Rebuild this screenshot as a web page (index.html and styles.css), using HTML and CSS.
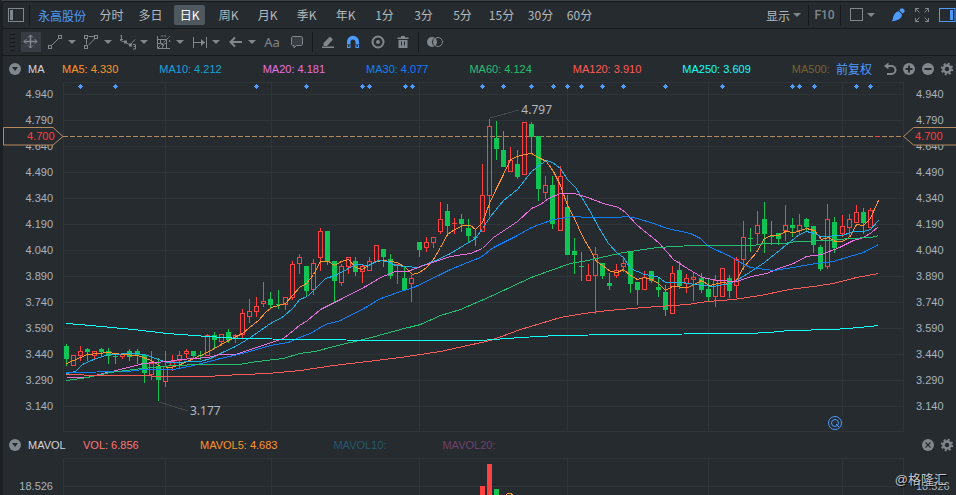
FILE: index.html
```html
<!DOCTYPE html>
<html lang="zh-CN">
<head>
  <meta charset="UTF-8">
  <meta name="viewport" content="width=device-width, initial-scale=1.0">
  <title>永高股份 日K</title>
  <link rel="stylesheet" href="styles.css">
</head>
<body>

<nav class="bar periods">
  <button class="icon-btn panel-left" aria-label="侧栏">
    <svg width="16" height="14" viewBox="0 0 16 14"><rect x="0.5" y="0.5" width="15" height="13" fill="none" stroke="currentColor"/><rect x="2" y="2" width="3" height="10" fill="currentColor"/></svg>
  </button>
  <span class="sep"></span>
  <a class="stock" href="#">永高股份</a>
  <div class="tabs">
    <button>分时</button>
    <button>多日</button>
    <button class="active">日K</button>
    <button>周K</button>
    <button>月K</button>
    <button>季K</button>
    <button>年K</button>
    <button>1分</button>
    <button>3分</button>
    <button>5分</button>
    <button>15分</button>
    <button>30分</button>
    <button>60分</button>
  </div>
  <div class="bar-right">
    <button class="display">显示<i class="caret"></i></button>
    <span class="sep"></span>
    <button class="f10">F10</button>
    <span class="sep"></span>
    <button class="shape" aria-label="形状"><svg width="14" height="14" viewBox="0 0 14 14"><rect x="0.5" y="0.5" width="12" height="12" fill="none" stroke="currentColor"/></svg><i class="caret"></i></button>
    <button class="icon-btn blue brush" aria-label="画笔">
      <svg width="14" height="14" viewBox="0 0 14 14" fill="currentColor"><path d="M9.500 .5h2.500l1.500 1.500v2l-2 1.500-3-3z"/><path d="M7.500 3l3.500 3.500c-.5 4-3 6-10.500 6.800 1.500-1.300 1.200-2.300 1.700-4.300C3 6 5 4 7.500 3z"/></svg>
    </button>
    <button class="icon-btn expand" aria-label="全屏">
      <svg width="14" height="14" viewBox="0 0 14 14" fill="none" stroke="currentColor"><path d="M.5 4V.5H4M.5.5l4 4M10 .5h3.500V4M13.500.5l-4 4M.5 10v3.500H4M.5 13.500l4-4M13.500 10v3.500H10M13.500 13.500l-4-4"/></svg>
    </button>
    <button class="icon-btn blue" aria-label="右栏">
      <svg width="17" height="14" viewBox="0 0 17 14"><rect x="0.5" y="0.5" width="15.500" height="13" fill="none" stroke="currentColor"/><rect x="11" y="2" width="3" height="10" fill="currentColor"/></svg>
    </button>
  </div>
</nav>

<div class="bar tools">
  <span class="handle"></span>
  <button class="tool selected" aria-label="移动">
    <svg width="16" height="16" viewBox="0 0 16 16" fill="none" stroke="currentColor"><path d="M7.500 1v13M1 7.500h13" stroke-width="1.500"/><path d="M5 3.500L7.500 1 10 3.500M5 11.500L7.500 14l2.500-2.500M3.500 5L1 7.500 3.500 10M11.500 5L14 7.500 11.500 10"/></svg>
  </button>
  <div class="draw-tools">
    <button aria-label="线段"><svg width="16" height="16" viewBox="0 0 16 16" fill="none" stroke="currentColor"><path d="M3.500 11.500l7-7"/><rect x="0.5" y="11.500" width="3" height="3"/><rect x="10.500" y="1.500" width="3" height="3"/></svg><i class="caret"></i></button>
    <button aria-label="多边形"><svg width="16" height="16" viewBox="0 0 16 16" fill="none" stroke="currentColor"><path d="M4.500 2.500h6M2.500 4.500v6M4.500 11l6.500-6.500"/><rect x="0.500" y="1.500" width="3" height="3"/><rect x="10.500" y="1.500" width="3" height="3"/><rect x="0.500" y="11.500" width="3" height="3"/></svg><i class="caret"></i></button>
    <button aria-label="波浪"><svg width="16" height="16" viewBox="0 0 16 16" fill="none" stroke="currentColor"><path d="M0 2.500L1.500 1v4M0 5.500h3M0 6.500L5 8l5 3 5-5.500"/><path d="M13 10.500h2.500V15H13M13.500 12.500h2"/><g fill="currentColor" stroke="none"><path d="M4 6.500h3v3H4zM9 9.500h3v3H9z"/></g></svg><i class="caret"></i></button>
    <button aria-label="江恩"><svg width="16" height="16" viewBox="0 0 16 16" fill="none" stroke="currentColor"><path d="M1.500 2v12.500H14M1.500 5.500h9v9"/><path d="M2 14L14 2" stroke-dasharray="3 1"/><path d="M4.500 5.500v4h-3M6.500 14c0-3 1-4 4-5M6 1v2M9 1v2M13.500 6v2M4 8l4 4" /></svg><i class="caret"></i></button>
    <button aria-label="区间"><svg width="16" height="16" viewBox="0 0 16 16" fill="none" stroke="currentColor"><path d="M1.500 3v11M14.500 3v11M2 8.500h11"/><path d="M9 5l4 3.500L9 12z" fill="currentColor" stroke="none"/></svg><i class="caret"></i></button>
    <button aria-label="箭头"><svg width="16" height="16" viewBox="0 0 16 16" fill="none" stroke="currentColor" stroke-width="2"><path d="M2.500 8H14M7 3.500L2.500 8 7 12.500"/></svg><i class="caret"></i></button>
  </div>
  <button class="tool text-tool">Aa</button>
  <button class="tool" aria-label="批注">
    <svg width="14" height="14" viewBox="0 0 14 14" stroke="currentColor" fill="#373d42"><path d="M2.500 1.500h9l1 1v7l-1 1H6.500L4 13v-2.500H2.500l-1-1v-7z"/></svg>
  </button>
  <span class="sep"></span>
  <div class="edit-tools">
    <button aria-label="标记"><svg width="14" height="14" viewBox="0 0 14 14" fill="currentColor"><path d="M9 1.500L12 4.500l-6 6.500H2.500V8z"/><path d="M1 11.500h12V13H1z"/></svg></button>
    <button class="blue" aria-label="磁铁"><svg width="14" height="14" viewBox="0 0 14 14" fill="currentColor"><path d="M1 9.500V6.800a6 6 0 0 1 12 0v2.700H9.500V7a2.500 2.500 0 0 0-5 0v2.500zM1 10v3h3.500v-3h-1v2H2v-2zM9.500 10v3H13v-3h-1v2h-1.500v-2z"/></svg></button>
    <button aria-label="显示"><svg width="14" height="14" viewBox="0 0 14 14"><circle cx="7" cy="7" r="5.500" fill="none" stroke="currentColor" stroke-width="2"/><circle cx="7" cy="7" r="2" fill="currentColor"/></svg></button>
    <button aria-label="删除"><svg width="14" height="14" viewBox="0 0 14 14" fill="currentColor"><path d="M1.500 2.500H5V1h4v1.500h3.500V4h-11zM2.500 5h9v8h-9z"/><path d="M5.500 6.500v4M8.500 6.500v4" stroke="#262b2f"/></svg></button>
  </div>
  <span class="sep"></span>
  <button class="tool" aria-label="叠加">
    <svg width="17" height="12" viewBox="0 0 17 12"><circle cx="5" cy="6" r="5" fill="currentColor"/><circle cx="11" cy="6" r="4.500" fill="none" stroke="currentColor"/><path d="M7.500 2a5 5 0 0 0 0 8" fill="none" stroke="#262b2f"/></svg>
  </button>
</div>

<section class="panel">
  <div class="panel-head">
    <button class="fold" aria-label="收起"></button>
    <span class="name">MA</span>
    <div class="legend">
      <span class="ma5">MA5: 4.330</span>
      <span class="ma10">MA10: 4.212</span>
      <span class="ma20">MA20: 4.181</span>
      <span class="ma30">MA30: 4.077</span>
      <span class="ma60">MA60: 4.124</span>
      <span class="ma120">MA120: 3.910</span>
      <span class="ma250">MA250: 3.609</span>
      <span class="ma500">MA500:</span>
    </div>
    <div class="head-icons">
      <a class="adjust" href="#">前复权</a>
      <button aria-label="撤销"><svg width="14" height="14" viewBox="0 0 14 14" fill="none" stroke="currentColor" stroke-width="2"><path d="M2 4h6.500a4 4 0 0 1 0 8H4"/><path d="M5.500.5L1 4l4.500 3.500z" fill="currentColor" stroke="none"/></svg></button>
      <button aria-label="放大"><svg width="14" height="14" viewBox="0 0 14 14"><circle cx="7" cy="7" r="6" fill="currentColor"/><path d="M7 3.500v7M3.500 7h7" stroke="#262b2f" stroke-width="2"/></svg></button>
      <button aria-label="缩小"><svg width="14" height="14" viewBox="0 0 14 14"><circle cx="7" cy="7" r="6" fill="currentColor"/><path d="M3.500 7h7" stroke="#262b2f" stroke-width="2"/></svg></button>
      <button aria-label="设置"><svg width="14" height="14" viewBox="0 0 14 14"><circle cx="7" cy="7" r="3.500" fill="none" stroke="currentColor" stroke-width="2.500"/><circle cx="7" cy="7" r="5.300" fill="none" stroke="currentColor" stroke-width="1.800" stroke-dasharray="2.080 2.080"/></svg></button>
    </div>
  </div>

  <div class="chart price-chart">
    <ul class="axis">
      <li>4.940</li><li>4.790</li><li>4.640</li><li>4.490</li><li>4.340</li><li>4.190</li><li>4.040</li>
      <li>3.890</li><li>3.740</li><li>3.590</li><li>3.440</li><li>3.290</li><li>3.140</li>
    </ul>
    <div class="plot">
      <svg id="price" viewBox="63 81 841 351" preserveAspectRatio="none"></svg>
      <span class="note high">4.797</span>
      <span class="note low">3.177</span>
      <svg class="marker" width="16" height="16" viewBox="0 0 16 16" fill="none" stroke="#4d9bff"><circle cx="8" cy="8" r="6.500"/><circle cx="8" cy="8" r="3.500"/><path d="M9 9l3 3"/></svg>
    </div>
    <ul class="axis right">
      <li>4.940</li><li>4.790</li><li>4.640</li><li>4.490</li><li>4.340</li><li>4.190</li><li>4.040</li>
      <li>3.890</li><li>3.740</li><li>3.590</li><li>3.440</li><li>3.290</li><li>3.140</li>
    </ul>
    <div class="tag tag-left">
      <svg width="61" height="19" viewBox="0 0 61 19"><path d="M.5.5H50l10 9-10 8.500H.5z"/></svg>
      <span>4.700</span>
    </div>
    <div class="tag tag-right">
      <svg width="53" height="19" viewBox="0 0 53 19"><path d="M55 .5H10.500l-10 9 10 8.500H55"/></svg>
      <span>4.700</span>
    </div>
  </div>
</section>

<section class="panel">
  <div class="panel-head">
    <button class="fold" aria-label="收起"></button>
    <span class="name vol-name">MAVOL</span>
    <div class="legend vol-legend">
      <span class="vol">VOL: 6.856</span>
      <span class="ma5">MAVOL5: 4.683</span>
      <span class="mavol10">MAVOL10:</span>
      <span class="mavol20">MAVOL20:</span>
    </div>
    <div class="head-icons">
      <button aria-label="关闭"><svg width="14" height="14" viewBox="0 0 14 14"><circle cx="7" cy="7" r="6" fill="currentColor"/><path d="M4.500 4.500l5 5M9.500 4.500l-5 5" stroke="#262b2f" stroke-width="1.200"/></svg></button>
      <button aria-label="设置"><svg width="14" height="14" viewBox="0 0 14 14"><circle cx="7" cy="7" r="3.500" fill="none" stroke="currentColor" stroke-width="2.500"/><circle cx="7" cy="7" r="5.300" fill="none" stroke="currentColor" stroke-width="1.800" stroke-dasharray="2.080 2.080"/></svg></button>
    </div>
  </div>
  <div class="chart vol-chart">
    <ul class="axis"><li>18.526</li></ul>
    <div class="plot"><svg id="volume" viewBox="63 458 841 60" preserveAspectRatio="none"></svg></div>
    <ul class="axis right"><li>18.526</li></ul>
  </div>
</section>

<div class="watermark">@格隆汇</div>

<script src="script.js"></script>
</body>
</html>
```

FILE: styles.css
```css
* {
  box-sizing: border-box;
}
body {
  margin: 0;
  height: 100vh;
  overflow: hidden;
  position: relative;
  border-left: 3px solid #1c2023;
  border-top: 1px solid #3b4246;
  background: #262b2f;
  color: #b3b9be;
  font-family: "Liberation Sans", "Noto Sans CJK SC", sans-serif;
  font-size: 11px;
}
button {
  padding: 0;
  border: none;
  background: none;
  color: inherit;
  font: inherit;
  cursor: pointer;
}
a {
  color: #4d9bff;
  text-decoration: none;
}
ul {
  list-style: none;
  margin: 0;
  padding: 0;
}
svg {
  display: block;
}
.blue {
  color: #4d9bff;
}
.sep {
  width: 1px;
  height: 20px;
  background: #171a1d;
}
.caret {
  border: 4px solid transparent;
  border-top-color: #80878d;
  border-bottom: none;
}

/* top bars */
.bar {
  display: flex;
  align-items: center;
  height: 27px;
  border-bottom: 1px solid #171a1d;
}
.periods {
  height: 28px;
  border-top: 1px solid #171a1d;
  font-family: "Noto Sans CJK SC", sans-serif;
  font-size: 12px;
}
.panel-left {
  margin: 0 5px;
  color: #80878d;
}
.stock {
  margin: 0 10px 0 8px;
}
.tabs {
  display: flex;
  gap: 8px;
}
.tabs button {
  width: 31px;
  height: 20px;
  line-height: 20px;
  border-radius: 2px;
  white-space: nowrap;
}
.tabs .active {
  background: #50585f;
  color: #fff;
}
.bar-right {
  display: flex;
  align-items: center;
  margin-left: auto;
  color: #80878d;
}
.display, .shape {
  display: flex;
  align-items: center;
  gap: 3px;
  margin-right: 7px;
}
.display {
  color: #b3b9be;
}
.f10 {
  width: 31px;
  font-family: Roboto, sans-serif;
  font-weight: 500;
}
.shape {
  margin: 0 16px 0 9px;
}
.brush, .expand {
  margin-right: 10px;
}

.tools {
  color: #80878d;
}
.handle {
  width: 5px;
  height: 17px;
  margin: 0 6px 0 7px;
  background: repeating-linear-gradient(#171a1d 0 1px, transparent 1px 4px);
}
.selected {
  padding: 2px;
  background: #373d42;
}
.draw-tools {
  display: flex;
  margin-left: 7px;
}
.draw-tools button {
  display: flex;
  align-items: center;
  gap: 4px;
  width: 36px;
}
.text-tool {
  width: 16px;
  margin-right: 10px;
  font-family: "Noto Sans", sans-serif;
  font-size: 13px;
}
.tools .sep {
  margin: 0 8px;
}
.edit-tools {
  display: flex;
  gap: 11px;
}

/* indicator panels */
.panel-head {
  display: flex;
  align-items: center;
  height: 26px;
  padding: 0 2px 0 6px;
}
.fold {
  display: flex;
  justify-content: center;
  align-items: center;
  width: 12px;
  height: 12px;
  border-radius: 50%;
  background: #80878d;
}
.fold::after {
  content: "";
  border: 3px solid transparent;
  border-top: 4px solid #262b2f;
  border-bottom: none;
}
.name {
  width: 34px;
  margin-left: 7px;
  color: #d0d4d8;
}
.vol-name {
  width: 55px;
}
.legend {
  display: flex;
  gap: 41px;
  white-space: nowrap;
}
.vol-legend {
  gap: 56px;
}
.ma5 { color: #ff9326; }
.ma10 { color: #10a5dc; }
.ma20 { color: #e96fe0; }
.ma30 { color: #0a80ff; }
.ma60 { color: #20c070; }
.ma120 { color: #ff5a55; }
.ma250 { color: #1ff; }
.ma500 { color: #76622f; }
.vol {
  min-width: 61px;
  color: #ff7474;
}
.mavol10 { color: #24596b; }
.mavol20 { color: #70426e; }
.head-icons {
  display: flex;
  align-items: center;
  gap: 5px;
  margin-left: auto;
  color: #80878d;
}
.adjust {
  margin-right: 6px;
  font-family: "Noto Sans CJK SC", sans-serif;
  font-size: 12px;
  line-height: 16px;
}

.chart {
  position: relative;
  display: grid;
  grid-template-columns: 60px 1fr 52px;
}
.price-chart {
  height: 351px;
  margin-top: -1px;
}
.axis {
  padding-right: 10px;
  text-align: right;
  color: #a9b3bd;
}
.axis.right {
  padding: 0 0 0 12px;
  text-align: left;
}
.axis li {
  height: 26px;
  line-height: 26px;
}
.vol-chart .axis {
  padding-top: 15px;
}
.plot {
  position: relative;
}
.plot > svg:first-child {
  width: 100%;
  height: 351px;
  shape-rendering: crispEdges;
}
.vol-chart .plot > svg:first-child {
  height: 60px;
}
.note {
  position: absolute;
  font-size: 12px;
  line-height: 14px;
  font-family: "Noto Sans", sans-serif;
}
.high {
  left: 54.5%;
  top: 22px;
}
.low {
  left: 15.1%;
  top: 323px;
}
.marker {
  position: absolute;
  left: 90.8%;
  top: 334px;
}
.tag {
  position: absolute;
  top: 46px;
  color: #ff3c3c;
}
.tag path {
  fill: #262b2f;
  stroke: #b58a5f;
}
.tag span {
  position: absolute;
  top: 0;
  left: 24px;
  line-height: 19px;
}
.tag-left {
  left: 0;
}
.tag-right {
  right: 0;
}
.tag-right span {
  left: 12px;
}
.watermark {
  position: absolute;
  right: 9px;
  bottom: 5px;
  font-size: 13px;
  line-height: 20px;
  color: #c4c6c8;
  text-shadow: 1px 1px 1px #000;
}
```

FILE: script.js
```js
const RED = '#ff4040';
const GREEN = '#10c455';
const X0 = 66.5;
const STEP = 7.05;

// [up/down, high, body top, body bottom, low]
const candles = [
  ['d',344,346,359,366],['u',355,355,366,366],['u',346,351,356,361],['d',348,349,352,361],['u',351,351,356,359],
  ['d',348,349,352,356],['d',348,351,356,364],['d',355,356,357,364],['u',354,354,357,359],['d',349,351,357,361],
  ['d',349,351,355,364],['d',355,355,373,383],['u',351,363,375,380],['d',358,366,380,401],['u',351,366,382,387],
  ['u',355,361,366,371],['u',351,355,361,368],['u',349,351,354,358],['d',351,351,356,358],['d',351,355,356,360],
  ['u',334,335,356,356],['d',332,335,340,349],['u',334,334,342,346],['d',329,332,340,343],['u',334,335,339,343],
  ['u',309,313,335,338],['u',299,311,317,323],['u',297,306,312,317],['u',282,301,304,307],['d',292,299,305,308],
  ['d',290,304,305,309],['u',297,297,305,310],['u',261,264,298,300],['u',254,257,264,274],['d',266,266,291,297],
  ['u',259,263,290,295],['u',228,231,258,271],['d',231,231,262,265],['d',261,261,281,302],['u',264,266,283,286],
  ['u',257,257,267,274],['d',257,261,272,276],['u',264,266,272,283],['u',257,261,271,271],['u',245,245,262,262],
  ['d',249,249,257,267],['d',254,259,276,279],['u',264,264,265,284],['d',266,278,290,291],['u',275,278,284,302],
  ['d',242,242,250,257],['u',237,242,248,252],['u',237,237,243,248],['u',202,219,232,234],['d',204,211,226,234],
  ['u',218,223,224,234],['d',214,219,224,232],['d',219,228,236,242],['d',230,237,238,246],['u',164,195,232,232],
  ['u',119,126,196,216],['d',121,138,149,160],['d',131,150,167,167],['u',147,160,172,172],['d',150,164,177,179],
  ['u',122,122,175,175],['d',122,124,137,153],['d',136,136,189,201],['u',176,185,193,199],['d',176,185,224,229],
  ['u',166,176,231,231],['d',195,207,255,255],['d',238,251,255,274],['d',252,266,267,281],['u',264,275,281,281],
  ['u',247,254,276,314],['d',263,263,276,279],['d',273,283,286,290],['u',264,270,276,278],['u',258,263,267,272],
  ['d',251,251,284,293],['d',282,282,290,305],['u',271,277,290,290],['d',271,271,281,283],['d',278,287,290,297],
  ['d',285,292,310,316],['u',266,273,314,314],['d',261,270,286,289],['u',274,278,284,293],['u',273,277,280,301],
  ['d',273,278,290,293],['d',279,289,297,301],['u',275,280,297,307],['u',268,268,297,297],['d',275,278,291,298],
  ['u',257,259,286,298],['u',221,237,260,270],['d',228,238,239,252],['u',211,225,234,245],['d',202,219,234,253],
  ['d',221,236,237,245],['d',233,233,239,245],['u',205,225,231,241],['d',218,225,228,237],['u',214,225,231,235],
  ['d',218,219,227,232],['d',226,226,245,253],['d',245,247,269,271],['u',204,219,267,269],['d',217,222,248,253],
  ['u',215,226,234,237],['u',214,219,228,236],['u',205,212,223,223],['d',208,212,223,234],['u',208,210,228,228],
  ['u',136,136,137,137]
];

const lines = {
  '#ff9326': '66,363 87,354 108,352 122,354 137,355 151,360 160,366 171,367 180,364 200,355 207,352 228,340 242,333 249,327 258,320 265,312 271,307 285,303 292,295 299,287 306,283 313,274 320,261 328,261 334,265 341,261 348,259 355,267 362,269 369,264 376,261 383,260 397,262 405,267 412,274 419,272 426,267 433,259 440,247 447,234 454,229 463,225 470,225 475,229 482,222 489,203 496,188 503,174 510,159 517,156 524,154 531,153 538,157 546,161 553,171 560,185 567,205 574,218 582,236 588,246 596,261 602,265 610,271 617,272 623,269 630,275 637,279 644,277 651,279 658,283 665,290 672,286 687,287 694,284 701,280 709,285 722,282 729,283 736,280 743,267 756,252 764,238 771,235 778,235 785,231 794,232 806,228 814,230 821,239 828,237 835,241 842,241 849,237 856,224 863,225 870,218 878,200',
  '#1cb0e6': '66,373 75,371 82,364 93,359 108,354 133,353 144,354 158,359 167,362 200,361 210,358 222,352 235,346 250,337 270,323 283,316 293,307 299,299 307,296 315,288 325,278 335,275 348,268 355,264 369,265 378,260 387,261 395,265 417,267 433,261 450,253 463,245 475,238 482,228 490,216 503,200 517,189 531,171 540,164 546,160 552,162 560,168 567,179 575,187 588,208 600,230 608,243 617,253 623,257 630,268 644,274 657,276 665,282 683,282 694,284 713,286 729,283 736,280 749,272 764,262 785,245 799,234 806,231 814,233 821,236 842,235 853,231 863,231 870,229 878,220',
  '#e96fe0': '66,377 87,377 107,372 120,369 143,363 167,361 180,359 207,357 220,354 235,354 250,349 283,338 299,325 307,320 320,309 340,299 367,285 380,277 395,271 407,271 423,265 450,256 470,253 482,248 493,237 517,221 531,208 540,204 548,198 560,193 574,193 587,197 603,203 618,207 625,212 637,225 658,242 667,252 673,259 687,268 702,277 717,280 736,281 751,276 766,273 778,268 793,263 806,256 821,254 839,247 853,240 863,237 871,232 878,226',
  '#0a80ff': '66,372 127,371 143,369 173,369 193,365 220,358 242,353 270,345 288,342 299,337 310,333 325,324 340,320 367,306 378,299 397,292 413,287 440,274 450,269 467,262 480,257 493,247 517,235 531,227 553,219 573,216 587,217 617,217 627,216 637,218 653,223 667,228 690,233 700,238 708,246 730,256 740,262 750,267 773,270 793,267 809,264 833,261 849,256 863,252 878,244',
  '#20c070': '66,380 87,377 110,372 133,369 153,367 173,365 200,364 238,364 257,361 283,358 299,353 315,351 333,346 367,338 400,329 420,324 440,315 460,309 490,296 520,282 533,276 553,269 570,263 587,260 623,252 657,247 692,245 753,245 764,243 783,243 796,241 829,240 849,238 871,237 878,235',
  '#ff5a55': '66,374 100,375 133,375 167,376 210,376 220,375 267,373 300,370 333,365 367,361 400,357 440,351 490,340 520,329 540,323 560,317 583,313 608,310 643,307 687,304 707,301 733,299 760,295 789,289 813,286 833,283 856,277 878,273',
  '#11ffff': '66,323 90,325 133,329 167,333 207,336 240,338 303,339 387,340 440,340 480,340 520,337 557,335 620,334 747,333 768,332 789,330 833,329 859,327 878,325'
};

const events = [80, 115, 256, 306, 362, 369, 405, 412, 482, 503, 531, 553, 567, 581, 602, 623, 665, 722, 792, 799, 814, 856, 870];
const columns = [63, 165, 271, 419, 567, 708, 842, 903];

function line(x1, y1, x2, y2, color, extra) {
  return `<line x1="${x1}" y1="${y1}" x2="${x2}" y2="${y2}" stroke="${color}" ${extra || ''}/>`;
}

function grid(rows, top, bottom) {
  let out = '';
  columns.forEach(x => { out += line(x + 0.5, top, x + 0.5, bottom, '#2e3438'); });
  rows.forEach(y => { out += line(63, y + 0.5, 904, y + 0.5, '#2e3438'); });
  return out;
}

function drawPrice() {
  const rows = [82, 431];
  for (let y = 94; y <= 406; y += 26) rows.push(y);
  let out = grid(rows, 82, 432);

  out += line(63, 136.5, 904, 136.5, '#b58a5f', 'stroke-dasharray="5 2"');
  out += line(490, 118, 519, 110, '#43494d') + line(159, 402, 188, 411, '#43494d');

  candles.forEach(([dir, high, top, bottom, low], i) => {
    const x = Math.floor(X0 + i * STEP);
    const color = dir === 'u' ? RED : GREEN;
    if (dir === 'u' && bottom - top > 1) {
      out += line(x + 0.5, high, x + 0.5, top, color);
      out += line(x + 0.5, bottom, x + 0.5, low, color);
      out += `<rect x="${x - 1.5}" y="${top + 0.5}" width="4" height="${bottom - top - 1}" fill="none" stroke="${color}"/>`;
    } else {
      out += line(x + 0.5, high, x + 0.5, low, color);
      out += `<rect x="${x - 2}" y="${top}" width="5" height="${bottom - top}" fill="${color}"/>`;
    }
  });

  for (const color in lines) {
    out += `<polyline points="${lines[color]}" transform="translate(0.5 0.5)" fill="none" stroke="${color}"/>`;
  }
  events.forEach(x => {
    out += `<path d="M${x - 2} 86h1v-1h1v-1h1v1h1v1h1v1h-1v1h-1v1h-1v-1h-1v-1h-1z" fill="#4d9bff"/>`;
  });
  document.getElementById('price').innerHTML = out;
}

function drawVolume() {
  let out = grid([458, 486], 458, 518);
  out += `<rect x="480" y="486" width="5" height="32" fill="${RED}"/>`;
  out += `<rect x="487" y="464" width="5" height="54" fill="${RED}"/>`;
  out += `<rect x="494" y="489" width="5" height="29" fill="${GREEN}"/>`;
  out += '<polyline points="503,499 507,494 510,493 513,495 518,500" fill="none" stroke="#ff9326"/>';
  document.getElementById('volume').innerHTML = out;
}

drawPrice();
drawVolume();
```
